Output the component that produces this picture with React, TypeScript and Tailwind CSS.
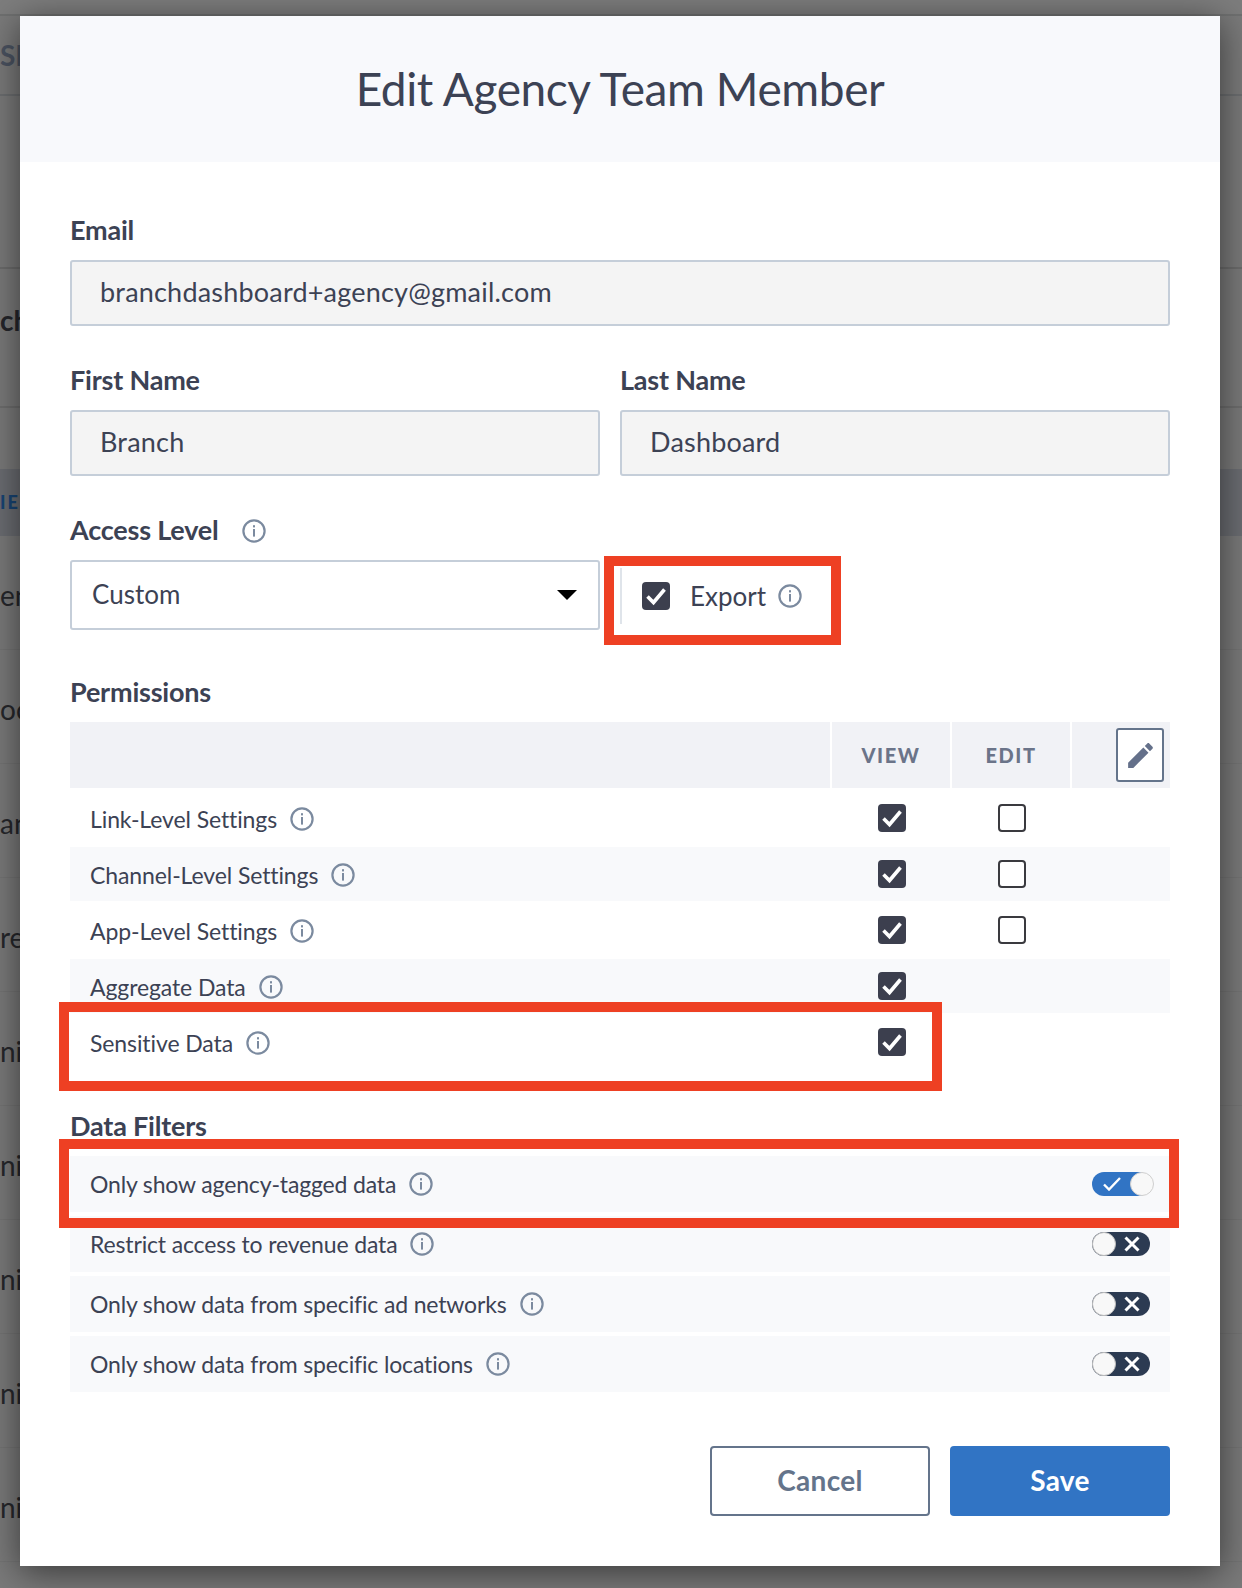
const font = { fontFamily: '"Lato", "Liberation Sans", sans-serif' };

const InfoIcon = ({ className = "" }: { className?: string }) => (
  <svg viewBox="0 0 24 24" className={`w-[24px] h-[24px] shrink-0 ${className}`} fill="none">
    <circle cx="12" cy="12" r="10.6" stroke="#7b8a9f" strokeWidth="2.2" />
    <rect x="11" y="10" width="2" height="7.6" fill="#7b8a9f" />
    <rect x="11" y="6.2" width="2" height="2.2" fill="#7b8a9f" />
  </svg>
);

const Checkbox = ({ checked = true }: { checked?: boolean }) =>
  checked ? (
    <span className="flex w-[28px] h-[28px] items-center justify-center rounded-[4px] bg-[#3c3f4e]">
      <svg viewBox="0 0 28 28" className="w-[28px] h-[28px]" fill="none">
        <path d="M5.5 14.5l6 6L22.5 7.5" stroke="#fff" strokeWidth="3.6" />
      </svg>
    </span>
  ) : (
    <span className="block w-[28px] h-[28px] rounded-[4px] border-2 border-[#3a3a3f] bg-white" />
  );

const Toggle = ({ on = false }: { on?: boolean }) =>
  on ? (
    <span className="relative block w-[62px] h-[24px]">
      <span className="absolute left-0 top-0 w-[58px] h-[24px] rounded-full bg-[#3174c4]">
        <svg viewBox="0 0 18 14" className="absolute left-[11px] top-[5px] w-[18px] h-[14px]" fill="none">
          <path d="M1 7.5l5 5L17 1" stroke="#fff" strokeWidth="2.4" />
        </svg>
      </span>
      <span className="absolute right-0 top-0 w-[24px] h-[24px] rounded-full bg-[#f8f8f8] border border-[#cfcfcf]" />
    </span>
  ) : (
    <span className="relative block w-[62px] h-[24px]">
      <span className="absolute left-0 top-0 w-[58px] h-[24px] rounded-full bg-[#2c3b52]">
        <svg viewBox="0 0 16 16" className="absolute left-[32px] top-[4px] w-[16px] h-[16px]" fill="none">
          <path d="M1.5 1.5l13 13M14.5 1.5l-13 13" stroke="#fff" strokeWidth="3" />
        </svg>
      </span>
      <span className="absolute left-0 top-0 w-[24px] h-[24px] rounded-full bg-[#f8f8f8] border border-[#bdbdbd]" />
    </span>
  );

const permissions = [
  { label: "Link-Level Settings", edit: true, striped: false },
  { label: "Channel-Level Settings", edit: true, striped: true },
  { label: "App-Level Settings", edit: true, striped: false },
  { label: "Aggregate Data", edit: false, striped: true },
  { label: "Sensitive Data", edit: false, striped: false },
];

const filters = [
  { label: "Only show agency-tagged data", on: true },
  { label: "Restrict access to revenue data", on: false },
  { label: "Only show data from specific ad networks", on: false },
  { label: "Only show data from specific locations", on: false },
];

const behind = ["en", "oc", "an", "re", "ni", "ni", "ni", "ni", "ni"];

const Label = ({ children }: { children: React.ReactNode }) => (
  <div className="h-[30px] flex items-center pb-[2px] text-[27px] font-bold text-[#3c4254] tracking-[-0.2px]">{children}</div>
);

const ReadOnly = ({ value }: { value: string }) => (
  <div className="h-[66px] flex items-center pl-[28px] pb-[2px] rounded-[3px] border-2 border-[#c5ced9] bg-[#f4f4f4] text-[27px] tracking-[0.2px] text-[#3c4254]">
    {value}
  </div>
);

const App = () => (
  <div className="relative w-[1242px] h-[1588px] overflow-hidden bg-[#7a7a7a]" style={font}>
    {/* page behind the overlay */}
    <div className="flex flex-col h-full">
      <div className="h-[16px] bg-[#7d7d7d] border-b-2 border-[#6f7070]" />
      <div className="h-[80px] flex items-center border-b-2 border-[#6c6e70] text-[28px] font-bold text-[#4b5361]">SI</div>
      <div className="h-[173px] border-b-2 border-[#6c6c6c]" />
      <div className="h-[139px] flex items-center pb-[36px] border-b-2 border-[#6e6e6e] text-[28px] font-bold text-[#25262b]">ch</div>
      <div className="h-[61px]" />
      <div className="h-[67px] flex items-center bg-[#6b6d72] text-[18px] font-black tracking-[2px] text-[#174474]">IE</div>
      {behind.map((t, i) => (
        <div key={i} className="h-[114px] shrink-0 flex items-center pt-[4px] border-b border-[#747474] text-[28px] text-[#26272b]">
          {t}
        </div>
      ))}
    </div>

    {/* modal */}
    <div className="absolute left-[20px] top-[16px] w-[1200px] h-[1550px] bg-white shadow-[0_6px_34px_rgba(0,0,0,0.55)]">
      <div className="h-[146px] flex items-center justify-center pb-[2px] bg-[#f8f9fc] text-[46px] text-[#3c4254] tracking-[-0.4px]">
        Edit Agency Team Member
      </div>

      <div className="px-[50px] pt-[54px]">
        <Label>Email</Label>
        <div className="mt-[14px]">
          <ReadOnly value="branchdashboard+agency@gmail.com" />
        </div>

        <div className="mt-[40px] grid grid-cols-[530px_550px] gap-x-[20px]">
          <div>
            <Label>First Name</Label>
            <div className="mt-[14px]">
              <ReadOnly value="Branch" />
            </div>
          </div>
          <div>
            <Label>Last Name</Label>
            <div className="mt-[14px]">
              <ReadOnly value="Dashboard" />
            </div>
          </div>
        </div>

        <div className="mt-[40px]">
          <div className="flex items-center gap-[23px]">
            <Label>Access Level</Label>
            <InfoIcon />
          </div>
          <div className="mt-[14px] flex items-start">
            <div className="w-[530px] h-[70px] flex items-center justify-between pl-[20px] pr-[21px] rounded-[3px] border-2 border-[#c5ced9] bg-white text-[26px] text-[#3c4254]">
              <span className="pb-[2px]">Custom</span>
              <span className="w-0 h-0 border-x-[10px] border-x-transparent border-t-[10px] border-t-black" />
            </div>
            <div className="ml-[20px] mt-[8px] h-[56px] flex items-center border-l-2 border-[#dfe4ea]">
              <span className="ml-[20px]">
                <Checkbox />
              </span>
              <span className="ml-[20px] text-[26px] text-[#3c4254]">Export</span>
              <InfoIcon className="ml-[12px]" />
            </div>
          </div>
        </div>

        <div className="mt-[48px]">
          <Label>Permissions</Label>
        </div>
        <div className="mt-[14px] mb-[3px] grid grid-cols-[760px_118px_118px_98px] gap-x-[2px] h-[66px]">
          <div className="bg-[#f1f2f6]" />
          <div className="flex items-center justify-center bg-[#f1f2f6] text-[20px] font-black tracking-[1.6px] text-[#6b7489]">VIEW</div>
          <div className="flex items-center justify-center bg-[#f1f2f6] text-[20px] font-black tracking-[1.6px] text-[#6b7489]">EDIT</div>
          <div className="flex items-center justify-end pr-[6px] bg-[#f1f2f6]">
            <span className="flex w-[48px] h-[54px] items-center justify-center rounded-[3px] border-2 border-[#64748b] bg-white">
              <svg viewBox="0 0 24 24" className="w-[33px] h-[33px]" fill="#64708a">
                <path d="M3 17.25V21h3.75L17.81 9.94l-3.75-3.75L3 17.25zM20.71 7.04c.39-.39.39-1.02 0-1.41l-2.34-2.34c-.39-.39-1.02-.39-1.41 0l-1.83 1.83 3.75 3.75 1.83-1.83z" />
              </svg>
            </span>
          </div>
        </div>
        <div className="flex flex-col gap-[2px]">
          {permissions.map((p) => (
            <div
              key={p.label}
              className={`h-[54px] grid grid-cols-[760px_118px_118px_98px] gap-x-[2px] items-center ${p.striped ? "bg-[#f8f9fb]" : ""}`}
            >
              <div className="flex items-center gap-[13px] pl-[20px] pt-[2px] text-[23px] tracking-[-0.1px] text-[#3c4254]">
                {p.label}
                <InfoIcon />
              </div>
              <div className="flex justify-center pl-[2px]">
                <Checkbox />
              </div>
              <div className="flex justify-center pl-[2px]">{p.edit && <Checkbox checked={false} />}</div>
            </div>
          ))}
        </div>

        <div className="mt-[43px]">
          <Label>Data Filters</Label>
        </div>
        <div className="mt-[14px] flex flex-col gap-[4px]">
          {filters.map((f) => (
            <div key={f.label} className="h-[56px] flex items-center justify-between pl-[20px] pr-[16px] bg-[#f8f9fb] text-[23px] tracking-[-0.15px] text-[#3c4254]">
              <span className="flex items-center gap-[13px]">
                {f.label}
                <InfoIcon />
              </span>
              <Toggle on={f.on} />
            </div>
          ))}
        </div>

        <div className="mt-[54px] flex justify-end gap-[20px]">
          <button className="w-[220px] h-[70px] pb-[2px] rounded-[4px] border-2 border-[#64748b] bg-white text-[28px] font-bold tracking-[0.3px] text-[#64748b]">Cancel</button>
          <button className="w-[220px] h-[70px] pb-[2px] rounded-[4px] bg-[#3174c4] text-[28px] font-bold tracking-[0.3px] text-white">Save</button>
        </div>
      </div>

      {/* red annotation boxes */}
      <div className="absolute left-[584px] top-[540px] w-[237px] h-[89px] border-[10px] border-[#ee4023]" />
      <div className="absolute left-[39px] top-[986px] w-[883px] h-[89px] border-[10px] border-[#ee4023]" />
      <div className="absolute left-[39px] top-[1123px] w-[1120px] h-[89px] border-[10px] border-[#ee4023]" />
    </div>
  </div>
);

export default App;
